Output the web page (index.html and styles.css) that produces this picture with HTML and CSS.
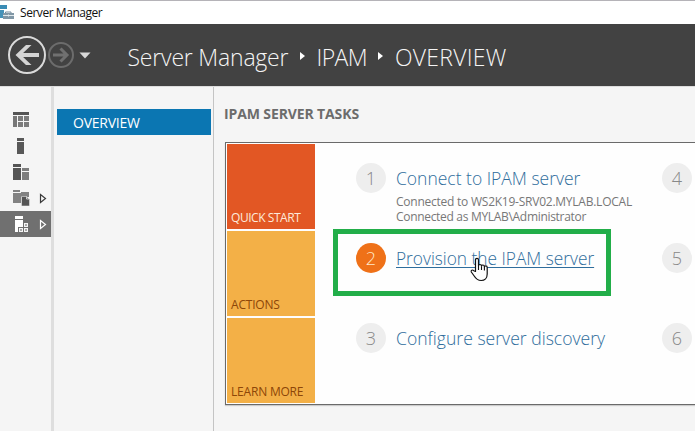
FILE: index.html
```html
<!DOCTYPE html>
<html lang="en">
<head>
<meta charset="utf-8">
<title>Server Manager</title>
<link rel="stylesheet" href="styles.css">
</head>
<body>
<div class="window">
  <div class="titlebar">
    <svg class="app-icon" width="15" height="20" viewBox="0 0 15 20"><path d="M0 4h7v4H0z" fill="#3b8cb5"/><path d="M0 9h4v8H0z" fill="#4692b8"/><path d="M5.500 12.500v-1.500h5.500v1.500" fill="none" stroke="#748b9c" stroke-width="1"/><path d="M3 12h11v6H3z" fill="#8197a6"/><path d="M3 14.500h11M8.500 13.500v2" stroke="#e0e8ec" stroke-width="1"/></svg>
    <span class="app-name">Server Manager</span>
  </div>
  <header class="header">
    <svg class="nav-buttons" width="92" height="62" viewBox="0 0 92 62"><circle cx="27" cy="31" r="18" fill="none" stroke="#dadada" stroke-width="2"/><path d="M39 31H18" stroke="#d4d4d4" stroke-width="4"/><path d="M26 21h5.500L21 31l10.500 10H26L15.500 31z" fill="#d4d4d4"/><circle cx="61" cy="31" r="12" fill="none" stroke="#6c6c6c" stroke-width="2"/><path d="M53 31h14M60.500 24.500L67 31l-6.500 6.500" fill="none" stroke="#707070" stroke-width="3"/><path d="M79.500 28.500h11L85 34.500z" fill="#d8d8d8"/></svg>
    <div class="crumbs">
      <span class="crumb c-root">Server Manager</span>
      <svg class="sep" width="5" height="8" viewBox="0 0 5 8"><path d="M0 0l5 4-5 4z" fill="#fff"/></svg>
      <span class="crumb c-ipam">IPAM</span>
      <svg class="sep" width="5" height="8" viewBox="0 0 5 8"><path d="M0 0l5 4-5 4z" fill="#fff"/></svg>
      <span class="crumb c-over">OVERVIEW</span>
    </div>
  </header>
  <div class="body">
    <nav class="rail">
      <div class="rail-item"><svg width="51" height="26"><path d="M13 6h16v3H13z" fill="#555"/><path d="M13 10h4v11h-4z" fill="#777"/><path d="M18 10h5v5h-5zM24 10h5v5h-5zM18 16h5v5h-5zM24 16h5v5h-5z" fill="#7c7c7c"/></svg></div>
      <div class="rail-item"><svg width="51" height="26"><path d="M17 6h7v3h-7zM17 10h7v12h-7z" fill="#585858"/></svg></div>
      <div class="rail-item"><svg width="51" height="26"><path d="M13 6h8v3h-8zM13 10h8v12h-8z" fill="#555"/><path d="M22 10h7v3h-7zM22 14h7v8h-7z" fill="#7d7d7d"/></svg></div>
      <div class="rail-item"><svg width="51" height="26"><path d="M13 6h7v2h-7zM13 9h8v10h-8zM21 8h8v5h-8z" fill="#828282"/><path d="M21.500 12.500h5l3 3V22h-8z" fill="#555" stroke="#f4f4f4" stroke-width=".5"/><path d="M26.500 12.500v2.500h2.500" fill="none" stroke="#f4f4f4" stroke-width=".7"/><path d="M40.500 10.500v8l5-4z" fill="none" stroke="#3a3a3a" stroke-width="1.200"/></svg></div>
      <div class="rail-item selected"><svg width="51" height="26"><path d="M15 5h8v3h-8zM15 9h8v7h-5v5h-3z" fill="#fff"/><path d="M24 12h4v4h-4zM19 17h4v4h-4zM24 17h4v4h-4z" fill="#f6f6f6"/><path d="M25 13h2v2h-2zM20 18h2v2h-2zM25 18h2v2h-2z" fill="#aaa"/><path d="M40.500 9.500v8l5-4z" fill="none" stroke="#fff" stroke-width="1.200"/></svg></div>
    </nav>
    <aside class="subnav"><div class="subnav-item"><span>OVERVIEW</span></div></aside>
    <main class="content">
      <h1><span>IPAM SERVER TASKS</span></h1>
      <section class="panel">
        <div class="tiles">
          <div class="tile hot"><span class="t-quick">QUICK START</span></div>
          <div class="tile"><span class="t-act">ACTIONS</span></div>
          <div class="tile"><span class="t-learn">LEARN MORE</span></div>
        </div>
        <div class="steps">
          <div class="step">
            <span class="num">1</span>
            <div class="text"><a class="link l1">Connect to IPAM server</a><p class="s1">Connected to WS2K19-SRV02.MYLAB.LOCAL</p><p class="s2">Connected as MYLAB\Administrator</p></div>
            <span class="num">4</span>
          </div>
          <div class="step">
            <span class="num active">2</span>
            <div class="text"><a class="link l2 hover">Provision the IPAM server</a></div>
            <span class="num">5</span>
          </div>
          <div class="step">
            <span class="num">3</span>
            <div class="text"><a class="link l3">Configure server discovery</a></div>
            <span class="num">6</span>
          </div>
        </div>
      </section>
    </main>
  </div>
  <div class="highlight"></div>
  <svg class="cursor" width="19" height="25" viewBox="0 0 19 25"><path d="M5.500 14.500V3Q5.500 1.300 7 1.300T8.500 3v6q0-1.500 1.500-1.500t1.500 1.700q0-1.200 1.400-1.200t1.500 1.800q0-1 1.400-1t1.400 1.700V17c0 4-2.500 6.500-6 6.500-4 0-5.500-2-7-4.500L1.300 15c-.7-1.700 1.200-2.700 2.400-1.300z" fill="#fff" stroke="#111" stroke-width="1.200" stroke-linejoin="round"/><path d="M8.500 9v4M11.500 9.500V13M14.400 10v3.500" stroke="#111" stroke-width="1.100"/></svg>
</div>
</body>
</html>
```
FILE: styles.css
```css
* { box-sizing: border-box; }
body { margin: 0; font-family: "Open Sans", "Noto Sans", sans-serif; background: #f5f5f5; }
svg { display: block; flex: none; }
h1, p { margin: 0; }
.window { position: relative; width: 695px; height: 431px; overflow: hidden; }
.titlebar { height: 24px; border-top: 1px solid #b5b3b8; background: #fff; display: flex; align-items: flex-start; }
.app-name { margin-left: 5px; font: 12px/24px "Open Sans", sans-serif; color: #111; letter-spacing: -0.45px; white-space: nowrap; }
.header { height: 62px; background: #424242; display: flex; }
.crumbs { display: flex; align-items: center; margin-left: 35.5px; height: 62px; padding-top: 3px; }
.crumb { font-size: 23px; font-weight: 300; line-height: 30px; color: #f5f5f5; white-space: nowrap; }
.c-root { width: 162px; letter-spacing: -0.2px; }
.c-ipam { width: 51.5px; letter-spacing: -0.6px; }
.c-over { width: 115px; letter-spacing: 0.25px; }
.sep { margin: 0 12px 2px 10px; }
.body { display: flex; height: 345px; border-top: 1px solid #ddd; }
.rail { width: 54px; border-right: 3px solid #dedede; padding-top: 19px; flex: none; }
.rail-item { height: 26px; }
.rail-item.selected { background: #707070; margin-top: 1px; }
.subnav { width: 160px; padding: 22px 2px 0 3px; border-right: 1px solid #c4c4c4; flex: none; }
.subnav-item { height: 26px; background: #0b76b2; color: #fff; padding-left: 16px; font-size: 14px; line-height: 27px; letter-spacing: -0.25px; }
.content { flex: 1; min-width: 0; padding: 17px 0 0 10px; }
h1 { height: 38px; font-size: 14px; font-weight: 700; line-height: 19px; color: #6c6c6c; letter-spacing: -0.12px; white-space: nowrap; }
.panel { width: 520px; height: 263px; margin-left: 1px; border: 1px solid #6a6a6a; background: #fefefe; display: flex; padding: 1px; box-shadow: 0 1px 1px #ccc; }
.tiles { width: 88px; display: grid; grid-template-rows: 85px 85px 85px; row-gap: 2px; flex: none; }
.tile { background: #f3b047; color: #8d4608; display: flex; align-items: flex-end; padding: 0 0 2px 4px; font-size: 12px; line-height: 18px; white-space: nowrap; }
.tile.hot { background: #e25724; color: #fde9da; }
.t-quick { letter-spacing: -0.45px; }
.t-act, .t-learn { letter-spacing: -0.2px; }
.steps { padding: 19px 0 0 41px; }
.step { display: flex; height: 80px; }
.num { width: 30px; height: 30px; border-radius: 50%; background: #eee; color: #888; font-size: 18px; font-weight: 300; line-height: 31px; text-align: center; flex: none; }
.num.active { background: #ef7118; color: #ffe9c9; }
.text { width: 276px; padding: 1px 0 0 10px; white-space: nowrap; }
.link { display: block; width: max-content; font-size: 19px; font-weight: 300; line-height: 28px; color: #2f6d9c; transform-origin: left; }
.l1 { transform: scaleX(0.92); }
.l2 { transform: scaleX(0.909); }
.l3 { transform: scaleX(0.925); }
.link.hover { text-decoration: underline; text-decoration-thickness: 1px; text-underline-offset: 2px; }
.text p { font-size: 12px; line-height: 15px; color: #777; }
.text .s1 { margin-top: 2px; letter-spacing: -0.24px; }
.text .s2 { letter-spacing: -0.31px; }
.highlight { position: absolute; left: 333px; top: 229px; width: 278px; height: 67px; border: 5px solid #22ae49; }
.cursor { position: absolute; left: 470px; top: 257px; }
```
